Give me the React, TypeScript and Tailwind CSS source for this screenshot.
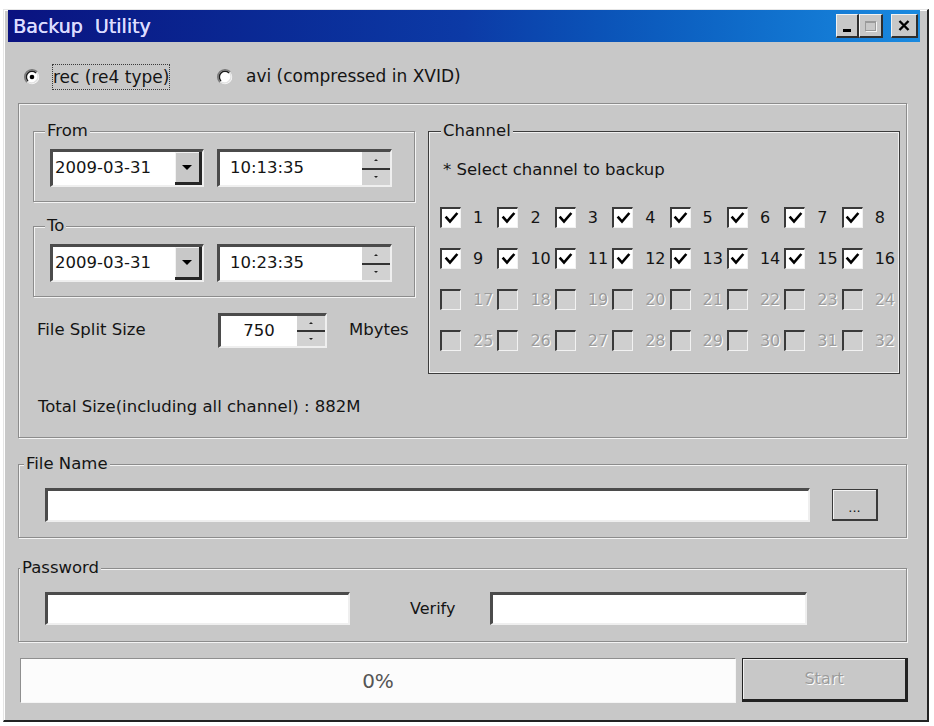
import React from "react";

const etched = "border border-[#8c8c8c] shadow-[inset_1px_1px_0_#f4f4f4,1px_1px_0_#f4f4f4]";
const legend = "ml-[11px] bg-[#c8c8c8] px-[2px] text-[16.5px] leading-[20px]";
const sunken =
  "border-t-[3px] border-l-[3px] border-r-2 border-b-2 border-t-[#4b4b4b] border-l-[#4b4b4b] border-r-[#efefef] border-b-[#efefef] bg-white";
const raised =
  "bg-[#c8c8c8] border-t border-l border-t-[#f2f2f2] border-l-[#f2f2f2] border-r-2 border-b-2 border-r-[#2e2e2e] border-b-[#2e2e2e]";
const disabledText = "text-[#9c9c9c] [text-shadow:1px_1px_0_#ffffff]";

function Radio({ checked = false }: { checked?: boolean }) {
  return (
    <svg width="16" height="16" viewBox="0 0 16 16" className="shrink-0">
      <circle cx="8" cy="8" r="7.2" fill="#ffffff" />
      <path d="M12.5 3.5 A6.4 6.4 0 0 1 3.5 12.5" stroke="#e2e2e2" strokeWidth="1.6" fill="none" />
      <path d="M2.9 13.1 A7.2 7.2 0 0 1 13.1 2.9" stroke="#7a7a7a" strokeWidth="1.6" fill="none" />
      <path d="M4 12 A5.6 5.6 0 0 1 12 4" stroke="#1c1c1c" strokeWidth="1.5" fill="none" />
      {checked && <circle cx="8" cy="8" r="2.3" fill="#000000" />}
    </svg>
  );
}

function Checkbox({ checked, disabled }: { checked: boolean; disabled: boolean }) {
  return (
    <div
      className={`flex h-[21px] w-[21px] shrink-0 items-center justify-center border-t-2 border-l-2 border-r border-b border-t-[#3a3a3a] border-l-[#3a3a3a] border-r-[#f2f2f2] border-b-[#f2f2f2] ${
        disabled ? "bg-[#cfcfcf]" : "bg-white"
      }`}
    >
      {checked && (
        <svg width="15" height="15" viewBox="0 0 15 15">
          <path d="M2.5 6.5 L6 10.5 L12.5 3" stroke="#000000" strokeWidth="2.6" fill="none" strokeLinecap="square" />
        </svg>
      )}
    </div>
  );
}

function Spin() {
  return (
    <div className="flex h-full w-[28px] shrink-0 flex-col">
      <div className="flex flex-1 items-center justify-center border-b-2 border-b-[#333333] bg-[#d2d2d2]">
        <div className="h-0 w-0 border-x-[2px] border-b-[2px] border-x-transparent border-b-[#222222]" />
      </div>
      <div className="flex flex-1 items-center justify-center bg-[#d2d2d2]">
        <div className="h-0 w-0 border-x-[2px] border-t-[2px] border-x-transparent border-t-[#222222]" />
      </div>
    </div>
  );
}

function DateRow({ date, time }: { date: string; time: string }) {
  return (
    <div className="flex items-center gap-[13px] pl-[16px]">
      <div className={`flex h-[38px] w-[154px] items-stretch ${sunken} border-r-0`}>
        <span className="flex flex-1 items-center pl-[2px] text-[16.5px]">{date}</span>
        <div className="flex w-[27px] items-center justify-center border-r-[3px] border-b-[3px] border-r-[#262626] border-b-[#262626] bg-[#c8c8c8] shadow-[inset_1px_1px_0_#f2f2f2]">
          <div className="h-0 w-0 border-x-[5px] border-t-[5px] border-x-transparent border-t-[#000000]" />
        </div>
      </div>
      <div className={`flex h-[38px] w-[175px] items-stretch ${sunken}`}>
        <span className="flex flex-1 items-center pl-[10px] text-[16.5px]">{time}</span>
        <Spin />
      </div>
    </div>
  );
}

function TitleButton({ children, className = "" }: { children: React.ReactNode; className?: string }) {
  return (
    <div className={`flex h-[24px] items-center justify-center ${raised} ${className}`}>{children}</div>
  );
}

export default function App() {
  const channels = Array.from({ length: 32 }, (_, i) => i + 1);

  return (
    <div className="h-[726px] w-[934px] bg-white pl-[3px] pt-[9px] font-['DejaVu_Sans',sans-serif] text-[#141414]">
      <div className="w-[926px] border-l border-t border-l-[#e6e6e6] border-t-[#e6e6e6] border-r-2 border-b-2 border-r-[#232323] border-b-[#232323] bg-[#c8c8c8] pb-[17px] pl-[4px] pr-[7px] shadow-[inset_1px_1px_0_#ffffff]">
        {/* Title bar */}
        <div className="flex h-[32px] items-center bg-linear-to-r from-[#0a1280] via-[#0c3aa6] to-[#1a8ae0] pl-[5px] pr-[2px]">
          <span className="whitespace-pre text-[19px] leading-none text-[#dcdcff] [text-shadow:0.4px_0_0_#dcdcff]">Backup  Utility</span>
          <div className="ml-auto flex items-center">
            <TitleButton className="w-[23px]">
              <div className="mt-[10px] h-[3px] w-[8px] bg-black" />
            </TitleButton>
            <TitleButton className="w-[24px]">
              <div className="h-[10px] w-[11px] border border-t-2 border-[#9a9a9a] shadow-[1px_1px_0_#f4f4f4]" />
            </TitleButton>
            <TitleButton className="ml-[8px] w-[27px]">
              <svg width="12" height="11" viewBox="0 0 12 11">
                <path d="M1.5 1 L10.5 10 M10.5 1 L1.5 10" stroke="#000000" strokeWidth="2.4" />
              </svg>
            </TitleButton>
          </div>
        </div>

        {/* Output type */}
        <div className="ml-[16px] mt-[22px] flex h-[26px] items-center text-[17px]">
          <div className="flex w-[193px] items-center">
            <Radio checked />
            <span className="ml-[12px] border border-dotted border-[#3a3a3a] leading-[24px]">rec (re4 type)</span>
          </div>
          <Radio />
          <span className="ml-[13px]">avi (compressed in XVID)</span>
        </div>

        {/* Time range + channels */}
        <div className={`ml-[10px] mt-[13px] flex w-[889px] items-start gap-[13px] pb-[20px] pl-[14px] pr-[6px] pt-[17px] ${etched}`}>
          <div className="w-[382px]">
            <fieldset className={`w-[382px] pb-[14px] pt-[8px] ${etched}`}>
              <legend className={legend}>From</legend>
              <DateRow date="2009-03-31" time="10:13:35" />
            </fieldset>
            <fieldset className={`mt-[14px] w-[382px] pb-[14px] pt-[8px] ${etched}`}>
              <legend className={legend}>To</legend>
              <DateRow date="2009-03-31" time="10:23:35" />
            </fieldset>

            <div className="mt-[16px] flex h-[35px] items-center text-[16.5px]">
              <span className="w-[185px] pl-[4px]">File Split Size</span>
              <div className={`flex h-[35px] w-[109px] items-stretch ${sunken}`}>
                <span className="flex flex-1 items-center justify-center">750</span>
                <Spin />
              </div>
              <span className="ml-[22px]">Mbytes</span>
            </div>

            <div className="mt-[49px] pl-[5px] text-[16.5px] leading-[20px]">
              Total Size(including all channel) : 882M
            </div>
          </div>

          <fieldset className="w-[472px] border border-[#3c3c3c] pb-[12px] pl-[11px] shadow-[inset_0_0_0_1px_#f0f0f0]">
            <legend className="ml-[1px] bg-[#c8c8c8] px-[2px] text-[16.5px] leading-[20px]">Channel</legend>
            <div className="mt-[19px] pl-[3px] text-[16.5px] leading-[20px]">* Select channel to backup</div>
            <div className="mt-[17px] grid grid-cols-8">
              {channels.map((n) => {
                const on = n <= 16;
                return (
                  <div key={n} className="flex h-[41px] w-[57px] items-center">
                    <Checkbox checked={on} disabled={!on} />
                    <span className={`ml-[12px] text-[16px] ${on ? "" : disabledText}`}>{n}</span>
                  </div>
                );
              })}
            </div>
          </fieldset>
        </div>

        {/* File name */}
        <fieldset className={`ml-[10px] mt-[16px] w-[889px] pb-[15px] pt-[14px] ${etched}`}>
          <legend className="ml-[5px] bg-[#c8c8c8] px-[2px] text-[16.5px] leading-[20px]">File Name</legend>
          <div className="flex items-center pl-[26px]">
            <div className={`h-[34px] w-[765px] ${sunken}`} />
            <div className="ml-[22px] flex h-[32px] w-[46px] items-end justify-center border border-r-2 border-b-2 border-[#3a3a3a] bg-[#c8c8c8] pb-[5px] text-[13px] leading-none shadow-[inset_1px_1px_0_#f4f4f4]">
              ...
            </div>
          </div>
        </fieldset>

        {/* Password */}
        <fieldset className={`ml-[10px] mt-[20px] w-[889px] pb-[16px] pt-[14px] ${etched}`}>
          <legend className="ml-[1px] bg-[#c8c8c8] px-[2px] text-[16.5px] leading-[20px]">Password</legend>
          <div className="flex items-center pl-[26px]">
            <div className={`h-[33px] w-[305px] ${sunken}`} />
            <span className="ml-[60px] w-[80px] text-[16px]">Verify</span>
            <div className={`h-[33px] w-[317px] ${sunken}`} />
          </div>
        </fieldset>

        {/* Progress + start */}
        <div className="ml-[12px] mt-[16px] flex items-start">
          <div className="flex h-[45px] w-[716px] items-center justify-center border border-t-[#8f8f8f] border-l-[#8f8f8f] border-r-[#f5f5f5] border-b-[#f5f5f5] bg-[#fcfcfc] text-[20px] text-[#555555]">
            0%
          </div>
          <div
            className={`ml-[6px] flex h-[44px] w-[166px] items-center justify-center border border-r-[3px] border-b-[3px] border-[#222222] bg-[#c8c8c8] text-[16px] shadow-[inset_1px_1px_0_#f2f2f2] ${disabledText}`}
          >
            Start
          </div>
        </div>
      </div>
    </div>
  );
}
